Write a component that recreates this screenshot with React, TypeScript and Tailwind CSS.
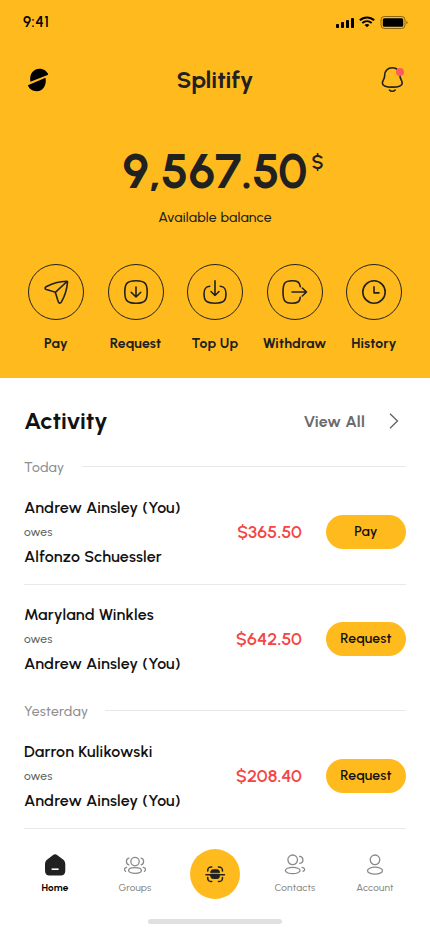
import type { ReactNode } from "react";

// Shared stroke wrapper, one unit = one pixel
const Icon = ({
  size = 24,
  stroke = 1.5,
  className = "",
  children,
}: {
  size?: number;
  stroke?: number;
  className?: string;
  children: ReactNode;
}) => (
  <svg
    width={size}
    height={size}
    viewBox={`0 0 ${size} ${size}`}
    fill="none"
    stroke="currentColor"
    strokeWidth={stroke}
    strokeLinecap="round"
    strokeLinejoin="round"
    className={`shrink-0 ${className}`}
  >
    {children}
  </svg>
);

const LogoIcon = () => (
  <svg width="22" height="24" viewBox="0 0 22 24" fill="#000">
    <path d="M3.400 13.700C2 6.800 6 .8 12.600.8c4.100 0 7.300 2.200 8.600 5.900Z" />
    <path d="M18.500 9.700C19.900 17 16 23.200 9.600 23.200 5.400 23.200 2.100 21 .9 17.300Z" />
  </svg>
);

const BellIcon = () => (
  <Icon size={28} stroke={1.6}>
    <path d="M14.300 1.800c-4.500 0-7.600 3-7.600 7.400 0 4.300-2.300 4.900-2.300 8 0 2.900 3 3.900 9.900 3.900s9.900-1 9.900-3.900c0-3.100-2.300-3.700-2.300-8 0-4.400-3.100-7.400-7.600-7.400Z" />
    <path d="M11.400 24c1.600 1.700 4.200 1.700 5.800 0" />
    <circle cx="22" cy="6" r="4" fill="#ff5a5f" stroke="none" />
  </Icon>
);

const SendIcon = () => (
  <Icon size={28} stroke={1.6}>
    <path d="M24.600 3.200c-6.600.2-15 2.500-20.500 5.500-1.400.8-1.300 2.200.1 2.700 2.900.9 6.100 1.600 9.100 2.900 1.100 3 1.800 6.400 3.100 9.700.6 1.500 2.100 1.500 2.900.1 3.300-5.700 5.700-13.400 6.200-19.900.1-.7-.3-1-.9-1ZM13.300 14.300 25 3.500" />
  </Icon>
);

const RequestIcon = () => (
  <Icon size={28} stroke={1.6}>
    <path d="M14 2.800c8.800 0 11.200 2.400 11.200 11.200S22.800 25.200 14 25.200 2.800 22.800 2.800 14 5.200 2.800 14 2.800Z" />
    <path d="M14 9v10M9.200 14.300 14 19l4.800-4.700" />
  </Icon>
);

const TopUpIcon = () => (
  <Icon size={28} stroke={1.6}>
    <path d="M8.800 8.200C4.500 8.700 3 10.500 3 15.700c0 7.400 2.500 9.500 11 9.500s11-2.100 11-9.500c0-5.200-1.500-7-5.800-7.500" />
    <path d="M14 2.800v14.700M10 13.500l4 4 4-4" />
  </Icon>
);

const WithdrawIcon = () => (
  <Icon size={28} stroke={1.6}>
    <path d="M19.300 8.700C18.700 4.100 16.700 2.800 11 2.800c-7 0-9 2.200-9 11.200s2 11.200 9 11.200c5.700 0 7.700-1.300 8.300-5.900" />
    <path d="M11 14h14.300M21.300 10l4.200 4-4.200 4" />
  </Icon>
);

const HistoryIcon = () => (
  <Icon size={28} stroke={1.6}>
    <circle cx="14" cy="14" r="11.200" />
    <path d="M14 8.800v6.100h5" />
  </Icon>
);

const HomeIcon = () => (
  <svg width="24" height="24" viewBox="0 0 24 24" fill="#212121">
    <path d="M9.800 2.200c1.600-1.200 3-1.200 4.600 0l5.300 4c1.900 1.400 2.600 2.900 2.600 5.300v5.200c0 4.400-1.300 5.800-5.700 5.800H7.700c-4.400 0-5.700-1.400-5.700-5.800v-5.200c0-2.400.7-3.900 2.600-5.300Z" />
    <path d="M8.600 16.200h7" stroke="#fff" strokeWidth="1.600" />
  </svg>
);

const GroupsIcon = () => (
  <Icon stroke={1.3}>
    <circle cx="12" cy="8.600" r="4.200" />
    <ellipse cx="12" cy="17.500" rx="6.400" ry="2.800" />
    <path d="M5.900 5.200C2.600 5.900 2.600 11 5.900 11.900M18.100 5.200c3.300.7 3.300 5.800 0 6.700M3.700 14.400c-2.500.5-3 2.500-1.100 4M20.300 14.400c2.500.5 3 2.500 1.100 4" />
  </Icon>
);

const ContactsIcon = () => (
  <Icon stroke={1.3}>
    <circle cx="9.700" cy="6.800" r="4.800" />
    <ellipse cx="9.700" cy="17.500" rx="7.400" ry="3.200" />
    <path d="M16.600 3.300c4.300.3 4.500 6.300.2 7M19 14.300c3.100.5 3.500 2.800 1.100 4" />
  </Icon>
);

const AccountIcon = () => (
  <Icon stroke={1.3}>
    <circle cx="12" cy="6.800" r="4.800" />
    <ellipse cx="12" cy="17.700" rx="7.500" ry="3.500" />
  </Icon>
);

const ScanIcon = () => (
  <Icon stroke={1.6} className="text-[#212121]">
    <path d="M4.700 9c0-3.200.8-4 4-4M15.500 5c3.200 0 4 .8 4 4M4.700 15.500c0 3.200.8 4 4 4M15.500 19.500c3.200 0 4-.8 4-4M3 12.700h18.400" />
    <path
      d="M7.800 10.400c0-2 .6-2.600 2.600-2.600h3.400c2 0 2.600.6 2.600 2.600ZM7.800 13.500h8.600c0 2.400-.6 3-2.600 3h-3.400c-2 0-2.600-.6-2.600-3Z"
      fill="currentColor"
      strokeWidth="1"
    />
  </Icon>
);

const actions = [
  { label: "Pay", icon: <SendIcon /> },
  { label: "Request", icon: <RequestIcon /> },
  { label: "Top Up", icon: <TopUpIcon /> },
  { label: "Withdraw", icon: <WithdrawIcon /> },
  { label: "History", icon: <HistoryIcon /> },
];

const StatusBar = () => (
  <div className="flex h-11 items-center justify-between pr-[22px] pl-[23px] text-black">
    <span className="text-[15px] font-semibold tracking-[0.5px]">9:41</span>
    <div className="flex items-center">
      <svg width="19" height="11" viewBox="0 0 19 11" fill="currentColor">
        <rect x="0" y="7" width="3" height="4" rx=".8" />
        <rect x="5" y="5" width="3" height="6" rx=".8" />
        <rect x="10" y="3" width="3" height="8" rx=".8" />
        <rect x="15" y="1" width="3" height="10" rx=".8" />
      </svg>
      <svg
        className="ml-1"
        width="16"
        height="12"
        viewBox="0 0 16 12"
        fill="none"
        stroke="currentColor"
        strokeWidth="2"
      >
        <path d="M.8 4.300C4.900.4 11.100.4 15.200 4.300" />
        <path d="M3.300 7C6.100 4.500 9.900 4.500 12.700 7" />
        <path d="m8 11.300-2.400-2.400c1.300-1.200 3.500-1.200 4.800 0Z" fill="currentColor" stroke="none" />
      </svg>
      <svg className="ml-[5px]" width="28" height="13" viewBox="0 0 28 13" fill="none">
        <rect x="1" y=".5" width="24" height="12" rx="3.300" stroke="#000" strokeOpacity=".45" />
        <rect x="2.800" y="2.200" width="20.400" height="8.600" rx="1.500" fill="#000" />
        <path d="M26.500 4.800v3.400c.7-.3 1.100-1 1.100-1.700s-.4-1.400-1.100-1.700Z" fill="#000" opacity=".5" />
      </svg>
    </div>
  </div>
);

const DayHeader = ({ children }: { children: ReactNode }) => (
  <div className="flex h-5 items-center gap-[17px]">
    <span className="text-[14px] font-medium tracking-[0.25px] text-[#8f8f8f]">{children}</span>
    <div className="-mt-px h-px flex-1 bg-[#e8e8e8]" />
  </div>
);

const DebtRow = ({
  from,
  to,
  amount,
  action,
}: {
  from: string;
  to: string;
  amount: string;
  action: string;
}) => (
  <div className="flex h-[74px] items-center">
    <div className="flex flex-1 flex-col whitespace-nowrap text-[#121212]">
      <span className="text-[16px] leading-[26px] font-semibold tracking-[0.2px]">{from}</span>
      <span className="text-[12px] leading-[23px] font-medium tracking-[0.2px] text-[#616161]">owes</span>
      <span className="text-[16px] leading-[25px] font-semibold tracking-[0.2px]">{to}</span>
    </div>
    <span className="text-[18px] font-semibold tracking-[0.1px] text-[#f54545]">{amount}</span>
    <button className="-mt-px ml-6 h-[34px] w-20 rounded-full bg-[#ffbb1d] text-[14px] font-semibold tracking-[0.2px] text-[#121212]">
      {action}
    </button>
  </div>
);

const NavItem = ({
  icon,
  label,
  active,
}: {
  icon: ReactNode;
  label: string;
  active?: boolean;
}) => (
  <div
    className={`flex w-[50px] flex-col items-center pt-1 text-[10px] ${
      active ? "font-bold text-black" : "font-medium text-[#8a8a8a]"
    }`}
  >
    {icon}
    <span className="mt-[3px] leading-4 tracking-[0.2px]">{label}</span>
  </div>
);

export default function App() {
  return (
    <div className="flex h-[932px] w-[430px] flex-col overflow-hidden bg-white font-[Urbanist,Lato,sans-serif]">
      {/* Balance */}
      <div className="h-[378px] shrink-0 bg-[#ffbb1d] text-[#212121]">
        <StatusBar />
        <div className="flex h-[72px] items-center justify-between pr-6 pl-[27px]">
          <LogoIcon />
          <h1 className="pl-[3px] text-[24px] leading-8 font-bold">Splitify</h1>
          <BellIcon />
        </div>
        <div className="flex h-[93px] items-start justify-center gap-1 pt-[24px] pl-4">
          <span className="text-[48px] leading-[62px] font-bold">9,567.50</span>
          <span className="mt-2 text-[20px] leading-7 font-semibold">$</span>
        </div>
        <p className="text-center text-[14px] leading-[18px] font-medium tracking-[0.2px]">Available balance</p>
        <div className="mt-[37px] flex justify-between px-7">
          {actions.map((a) => (
            <div key={a.label} className="flex w-14 flex-col items-center">
              <div className="flex size-14 items-center justify-center rounded-full border border-[#212121]">
                {a.icon}
              </div>
              <span className="mt-[14px] text-[14px] leading-5 font-bold tracking-[0.2px] whitespace-nowrap">
                {a.label}
              </span>
            </div>
          ))}
        </div>
      </div>

      {/* Activity */}
      <div className="mx-6 h-[451px] shrink-0 border-b border-[#e8e8e8]">
        <div className="flex h-[86px] items-center justify-between text-[#121212]">
          <h2 className="text-[24px] font-bold">Activity</h2>
          <div className="flex items-center gap-[24px] pr-[7px] text-[#6b6b6b]">
            <span className="pt-px text-[16px] font-bold tracking-[0.2px]">View All</span>
            <svg width="10" height="16" viewBox="0 0 10 16" fill="none" stroke="#616161" strokeWidth="1.300">
              <path d="m1 .8 7.500 7.200L1 15.200" />
            </svg>
          </div>
        </div>
        <div className="-mt-[7px]">
          <DayHeader>Today</DayHeader>
        </div>
        <div className="mt-[18px]">
          <DebtRow from="Andrew Ainsley (You)" to="Alfonzo Schuessler" amount="$365.50" action="Pay" />
        </div>
        <div className="mt-[15px] border-t border-[#e8e8e8] pt-[17px]">
          <DebtRow from="Maryland Winkles" to="Andrew Ainsley (You)" amount="$642.50" action="Request" />
        </div>
        <div className="mt-[25px]">
          <DayHeader>Yesterday</DayHeader>
        </div>
        <div className="mt-[18px]">
          <DebtRow from="Darron Kulikowski" to="Andrew Ainsley (You)" amount="$208.40" action="Request" />
        </div>
      </div>

      {/* Tab bar */}
      <div className="mt-5 flex h-[50px] shrink-0 justify-between px-[30px]">
        <NavItem icon={<HomeIcon />} label="Home" active />
        <NavItem icon={<GroupsIcon />} label="Groups" />
        <div className="flex size-[50px] items-center justify-center rounded-full bg-[#ffbb1d]">
          <ScanIcon />
        </div>
        <NavItem icon={<ContactsIcon />} label="Contacts" />
        <NavItem icon={<AccountIcon />} label="Account" />
      </div>
      <div className="mx-auto mt-5 h-[5px] w-[134px] shrink-0 rounded-full bg-[#e0e0e0]" />
    </div>
  );
}
